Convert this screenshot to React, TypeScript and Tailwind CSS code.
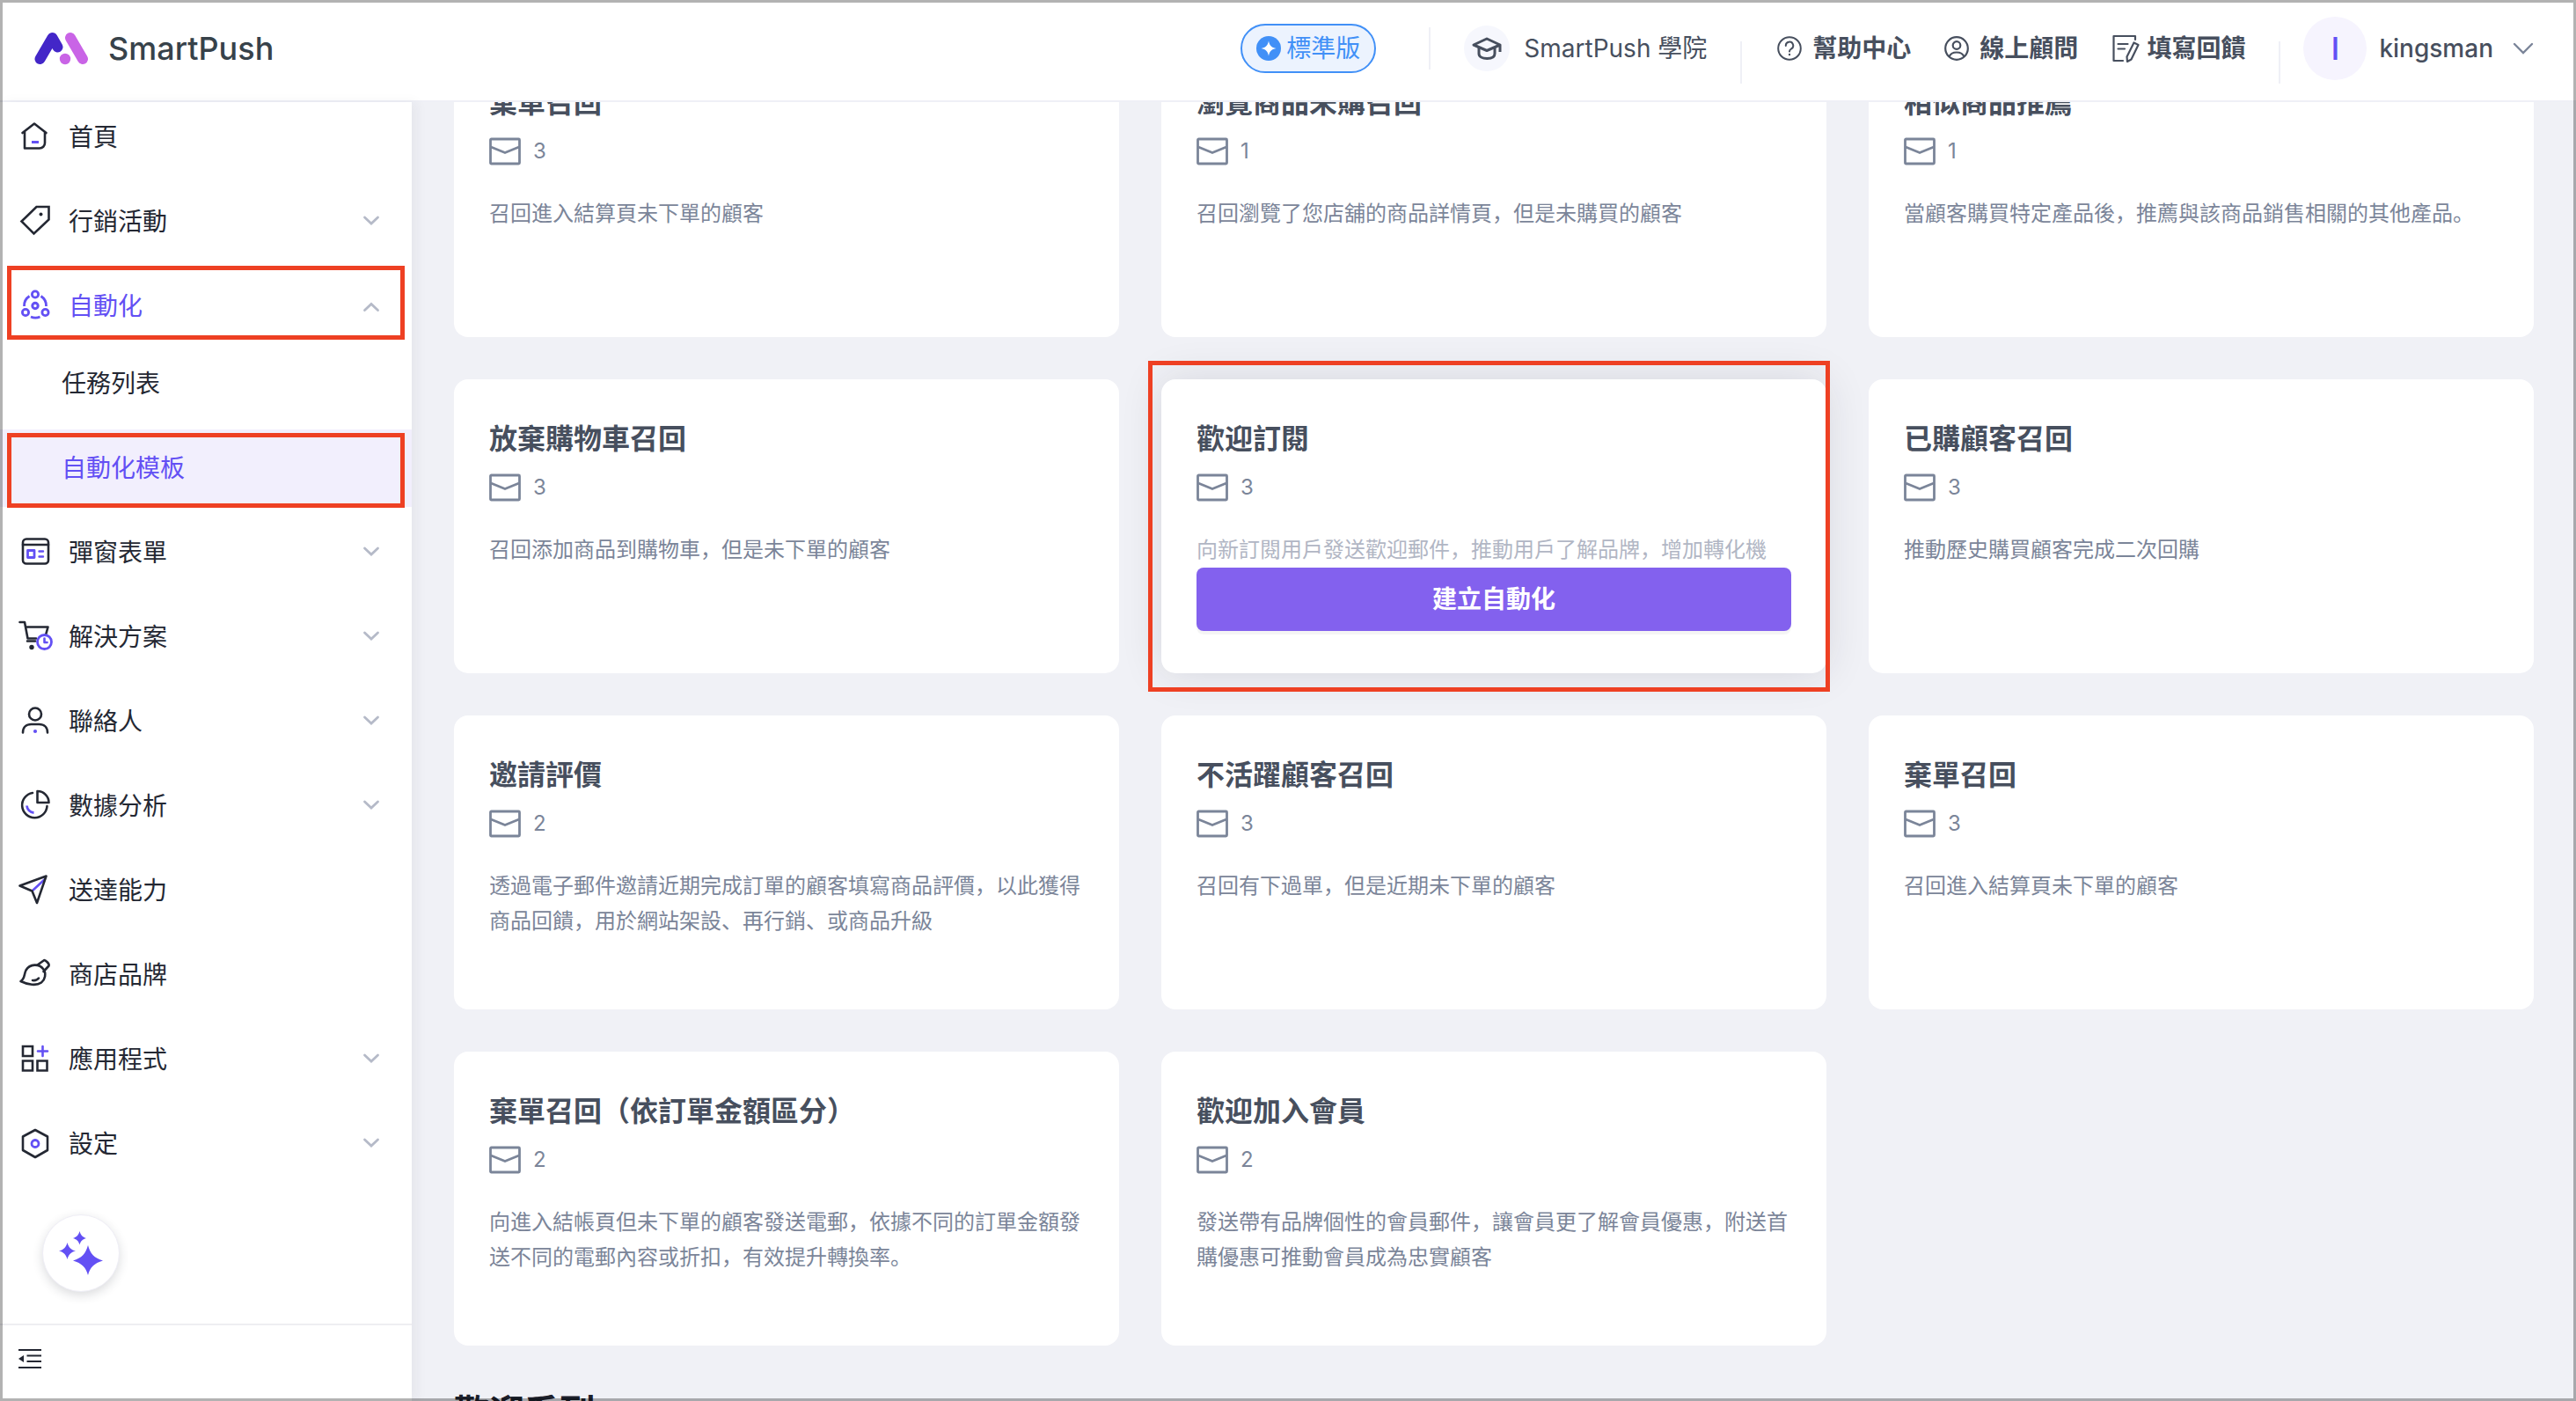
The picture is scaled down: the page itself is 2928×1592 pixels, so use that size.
import React from "react";

const INK = "#242833";
const VIOLET = "#6350f4";

type IconProps = { children: React.ReactNode; color?: string };

function NavSvg({ children, color = INK }: IconProps) {
  return (
    <svg viewBox="0 0 40 40" className="size-10 shrink-0" fill="none" stroke={color} strokeWidth="2.6" strokeLinejoin="round" strokeLinecap="round" aria-hidden="true">
      {children}
    </svg>
  );
}

const icons: Record<string, React.ReactNode> = {
  home: (
    <NavSvg>
      <path d="M5.5 15 19 4.500 32.500 15M8 14v18.500h17a6 6 0 0 0 6-6V14" />
      <path d="M16 25.500h8" stroke={VIOLET} strokeWidth="3" strokeLinecap="butt" />
    </NavSvg>
  ),
  tag: (
    <NavSvg>
      <path d="M21.500 3h14V17.500L18.500 33.500 4.500 19.500z" strokeLinejoin="miter" />
      <circle cx="26.500" cy="11.500" r="2" fill={INK} stroke="none" />
    </NavSvg>
  ),
  automation: (
    <NavSvg color={VIOLET}>
      <circle cx="20" cy="6.500" r="3.600" strokeWidth="2.800" />
      <circle cx="9" cy="27" r="3.600" strokeWidth="2.800" />
      <circle cx="31.500" cy="27" r="3.600" strokeWidth="2.800" />
      <circle cx="20" cy="19.500" r="3.200" strokeWidth="3" />
      <path d="M13.500 8.500A13 13 0 0 0 7.500 20M26.500 8.500A13 13 0 0 1 32.500 20M15 32a14 14 0 0 0 10.500 0" strokeWidth="2.800" strokeLinecap="butt" />
    </NavSvg>
  ),
  form: (
    <NavSvg>
      <rect x="6" y="4.500" width="29" height="28" rx="4" />
      <path d="M6 11h29" />
      <rect x="11.500" y="17.500" width="7.500" height="8" stroke={VIOLET} strokeWidth="2.800" />
      <path d="M24.500 18.500h4.500M24.500 24.500h4.500" stroke={VIOLET} strokeWidth="2.400" />
    </NavSvg>
  ),
  solution: (
    <NavSvg>
      <path d="M2.500 3h5.500l3.500 18.500h9.500M9 8.500h25.500l-2.500 9M11 24.500h9" />
      <circle cx="16" cy="31.500" r="2.700" fill={INK} stroke="none" />
      <circle cx="30.500" cy="25.500" r="8" stroke={VIOLET} strokeWidth="2.800" fill="#fff" />
      <path d="M30.500 21.500v4.500h3" stroke={VIOLET} />
    </NavSvg>
  ),
  contact: (
    <NavSvg>
      <circle cx="20" cy="11.500" r="7" />
      <path d="M6 32.500c0-6 4-9.500 9.500-9.500h9c5.500 0 9.500 3.500 9.500 9.500" />
      <circle cx="20" cy="31" r="2.100" fill={VIOLET} stroke="none" />
    </NavSvg>
  ),
  analytics: (
    <NavSvg>
      <path d="M17 5a14.200 14.200 0 1 0 16.500 15" />
      <path d="M22.500 3v13h13a13 13 0 0 0-13-13z" />
      <path d="M10.500 19.500a8.500 8.500 0 0 0 8 8" stroke={VIOLET} strokeWidth="2.800" strokeLinecap="butt" />
    </NavSvg>
  ),
  send: (
    <NavSvg>
      <path d="M17 20 30.500 7.500" stroke={VIOLET} strokeWidth="2.600" />
      <path d="M2.500 14.500 32.500 3.500 22 34 16.500 20.500z" />
    </NavSvg>
  ),
  brush: (
    <NavSvg>
      <path d="M3.500 27C8.500 24 7 19.500 9.500 14.500a12 12 0 0 1 20-1c3.500 5 1.500 12-2.500 15-5.500 4-15.500 2.500-23.500-1.500z" />
      <path d="M22.500 8.500 30 3.200c1.500-.6 6.500 4 5.500 6.300L29.500 16M17 26c3.500.5 5.500-.5 7-2.500" />
    </NavSvg>
  ),
  apps: (
    <NavSvg>
      <path d="M6 5h11v11H6zM6 21.500h11v11H6zM22.500 21.500h11v11h-11z" strokeLinejoin="miter" />
      <path d="M28.500 5v11M23 10.500h11" stroke={VIOLET} />
    </NavSvg>
  ),
  settings: (
    <NavSvg>
      <path d="M20 4 34 11.500v15.500L20 35 6 27V11.500z" />
      <circle cx="20" cy="19.500" r="4" stroke={VIOLET} strokeWidth="2.800" />
    </NavSvg>
  ),
};

function Caret({ open = false }: { open?: boolean }) {
  return (
    <svg viewBox="0 0 20 14" className="h-3.5 w-5" fill="none" stroke="#b5bac8" strokeWidth="2.800" strokeLinecap="round" aria-hidden="true">
      <path d={open ? "M2.500 11.500 10 4.500l7.500 7" : "M2.500 2 10 9l7.500-7"} />
    </svg>
  );
}

type Item = { icon: string; label: string; caret?: boolean };

const lower: Item[] = [
  { icon: "form", label: "彈窗表單", caret: true },
  { icon: "solution", label: "解決方案", caret: true },
  { icon: "contact", label: "聯絡人", caret: true },
  { icon: "analytics", label: "數據分析", caret: true },
  { icon: "send", label: "送達能力" },
  { icon: "brush", label: "商店品牌" },
  { icon: "apps", label: "應用程式", caret: true },
  { icon: "settings", label: "設定", caret: true },
];

function NavItem({ icon, label, caret }: Item) {
  return (
    <li>
      <a href="#" className="flex h-22 items-center gap-[18px] pr-9 pl-5 text-[#242833]">
        {icons[icon]}
        <span className="grow">{label}</span>
        {caret && <Caret />}
      </a>
    </li>
  );
}

function Sidebar() {
  return (
    <aside className="relative z-10 flex w-[468px] shrink-0 flex-col bg-white text-[28px] leading-10 shadow-[6px_0_12px_rgba(30,35,50,0.05)]">
      <nav className="min-h-0 grow overflow-hidden">
        <ul className="-mt-1 flex flex-col gap-2">
          <NavItem icon="home" label="首頁" />
          <NavItem icon="tag" label="行銷活動" caret />
          <li>
            <a href="#" className="relative flex h-22 items-center gap-[18px] pr-9 pl-5 text-[#6350f4]">
              {icons.automation}
              <span className="grow">自動化</span>
              <Caret open />
              <span className="pointer-events-none absolute inset-x-2 -top-0.5 bottom-1.5 border-5 border-[#ee4023]" />
            </a>
            <ul className="flex flex-col gap-2">
              <li>
                <a href="#" className="flex h-22 items-center pl-[70px] text-[#242833]">任務列表</a>
              </li>
              <li>
                <a href="#" aria-current="page" className="relative flex h-22 items-center bg-[#f2effd] pl-[70px] text-[#6350f4]">
                  自動化模板
                  <span className="pointer-events-none absolute inset-x-2 top-1 -bottom-px border-5 border-[#ee4023]" />
                </a>
              </li>
            </ul>
          </li>
          {lower.map((item) => (
            <NavItem key={item.label} {...item} />
          ))}
        </ul>
      </nav>
      <button type="button" aria-label="AI 助手" className="absolute bottom-31 left-12 flex size-22 items-center justify-center rounded-full border border-[#efeef6] bg-white shadow-[0_4px_12px_rgba(30,35,50,0.16)]">
        <svg viewBox="0 0 50 50" className="size-[50px]" fill={VIOLET} aria-hidden="true">
          <path d="M33 16c2.500 9.500 7 14.500 17 17.500-10 3-14.500 7.500-17 16.500-2.500-9-7-13.500-17-16.500 10-3 14.500-8 17-17.500zM9.500 13c1.500 5.500 4 8 9.500 9.500-5.500 1.500-8 4-9.500 9.500C8 26.500 5.500 24 0 22.500 5.500 21 8 18.500 9.500 13zM23.500 0c1.200 4.500 3.200 6.500 7.500 8-4.300 1.300-6.300 3.300-7.500 7.500C22.300 11.300 20.300 9.300 16 8c4.300-1.500 6.300-3.500 7.500-8z" />
        </svg>
      </button>
      <div className="flex h-22 shrink-0 items-center border-t-2 border-[#eeeef2] pb-2.5 pl-5">
        <button type="button" aria-label="收合選單">
          <svg viewBox="0 0 28 24" className="h-6 w-7" fill="none" stroke={INK} strokeWidth="2" aria-hidden="true">
            <path d="M1 2h26M10.500 8.500H27M10.500 15H27M1 22h26" />
            <path d="M7 8v8l-6-4z" fill={INK} stroke="none" />
          </svg>
        </button>
      </div>
    </aside>
  );
}

function Header() {
  return (
    <header className="flex h-29 shrink-0 items-center border-b-2 border-[#eff0f6] bg-white pr-12 pb-1 pl-[39px] text-[28px] leading-10 text-[#474f5e]">
      <svg viewBox="0 0 62 38" className="h-[38px] w-[62px]" fill="none" strokeWidth="12" strokeLinecap="round" strokeLinejoin="round" role="img" aria-label="SmartPush logo">
        <path d="M6.500 31 20.500 7l6 10.500" stroke="#4326c8" />
        <path d="M41 7l14 24" stroke="#c964e6" />
        <circle cx="35" cy="31" r="6.200" fill="#c964e6" />
      </svg>
      <span className="ml-[22px] text-[36px] font-medium text-[#37424a]">SmartPush</span>
      <div className="ml-auto flex items-center">
        <button type="button" className="flex h-14 items-center gap-1.5 rounded-full border-2 border-[#4190f7] bg-[#ecf3fe] px-4 text-[#4190f7]">
          <svg viewBox="0 0 28 28" className="size-7" aria-hidden="true">
            <circle cx="14" cy="14" r="14" fill="#4190f7" />
            <path d="M14 5.500c1.200 5.500 3 7.300 8.500 8.500-5.500 1.200-7.300 3-8.500 8.500-1.200-5.500-3-7.300-8.500-8.500 5.500-1.200 7.300-3 8.500-8.500z" fill="#fff" />
          </svg>
          標準版
        </button>
        <span className="ml-15 h-12 w-0.5 bg-[#eff0f6]" />
        <a href="#" className="ml-[38px] flex items-center gap-4">
          <span className="flex size-13 items-center justify-center rounded-full bg-[#f6f7fd]">
            <svg viewBox="0 0 36 28" className="h-7 w-9" fill="none" stroke="#474f5e" strokeWidth="3" strokeLinejoin="round" aria-hidden="true">
              <path d="M18 3 3 10l15 6.500L33 10zM33 9.500V18" />
              <path d="M9 13v7c0 3.500 4 5.500 9.300 5.500S27 23.500 27 20v-7" />
            </svg>
          </span>
          SmartPush 學院
        </a>
        <span className="mt-8 ml-[38px] h-12 w-0.5 bg-[#eff0f6]" />
        <nav className="ml-10 flex items-center gap-[38px] font-semibold">
          <a href="#" className="flex items-center gap-3">
            <svg viewBox="0 0 28 28" className="size-7" fill="none" stroke="#474f5e" strokeWidth="2" strokeLinecap="round" aria-hidden="true">
              <circle cx="14" cy="14" r="12.800" />
              <path d="M9.800 11a4.200 4.200 0 1 1 6.200 3.500c-1.500.9-2 1.600-2 3" />
              <circle cx="14" cy="21" r="1.200" fill="#474f5e" stroke="none" />
            </svg>
            幫助中心
          </a>
          <a href="#" className="flex items-center gap-3">
            <svg viewBox="0 0 28 28" className="size-7" fill="none" stroke="#474f5e" strokeWidth="2.200" aria-hidden="true">
              <circle cx="14" cy="14" r="12.800" />
              <circle cx="14" cy="10.500" r="4.300" />
              <path d="M5.500 23.500c1.500-4 5-5 8.500-5s7 1 8.500 5" />
            </svg>
            線上顧問
          </a>
          <a href="#" className="flex items-center gap-2">
            <svg viewBox="0 0 32 32" className="size-8" fill="none" stroke="#474f5e" strokeWidth="2.200" strokeLinecap="round" strokeLinejoin="round" aria-hidden="true">
              <path d="M27 6V2H2.500v28H13M7.500 11h11M7.500 16.500H15" />
              <path d="M25.500 9.500l5 2.500-8 16.500-4.500 2.500-.5-5.500z" />
            </svg>
            填寫回饋
          </a>
        </nav>
        <span className="mt-8 ml-[38px] h-12 w-0.5 bg-[#eff0f6]" />
        <button type="button" className="ml-[26px] flex items-center font-medium">
          <span className="flex size-18 items-center justify-center rounded-full bg-[#f6f4fe] text-[36px] text-[#6350f4]">I</span>
          <span className="ml-3.5">kingsman</span>
          <svg viewBox="0 0 24 16" className="ml-[22px] h-4 w-6" fill="none" stroke="#7b8599" strokeWidth="2.400" strokeLinecap="round" aria-hidden="true">
            <path d="M2 3l10 10L22 3" />
          </svg>
        </button>
      </div>
    </header>
  );
}

type Template = { title: string; count: number; text: string; active?: boolean };

const templates: Template[] = [
  { title: "棄單召回", count: 3, text: "召回進入結算頁未下單的顧客" },
  { title: "瀏覽商品未購召回", count: 1, text: "召回瀏覽了您店舖的商品詳情頁，但是未購買的顧客" },
  { title: "相似商品推薦", count: 1, text: "當顧客購買特定產品後，推薦與該商品銷售相關的其他產品。" },
  { title: "放棄購物車召回", count: 3, text: "召回添加商品到購物車，但是未下單的顧客" },
  { title: "歡迎訂閱", count: 3, text: "向新訂閱用戶發送歡迎郵件，推動用戶了解品牌，增加轉化機", active: true },
  { title: "已購顧客召回", count: 3, text: "推動歷史購買顧客完成二次回購" },
  { title: "邀請評價", count: 2, text: "透過電子郵件邀請近期完成訂單的顧客填寫商品評價，以此獲得商品回饋，用於網站架設、再行銷、或商品升級" },
  { title: "不活躍顧客召回", count: 3, text: "召回有下過單，但是近期未下單的顧客" },
  { title: "棄單召回", count: 3, text: "召回進入結算頁未下單的顧客" },
  { title: "棄單召回（依訂單金額區分）", count: 2, text: "向進入結帳頁但未下單的顧客發送電郵，依據不同的訂單金額發送不同的電郵內容或折扣，有效提升轉換率。" },
  { title: "歡迎加入會員", count: 2, text: "發送帶有品牌個性的會員郵件，讓會員更了解會員優惠，附送首購優惠可推動會員成為忠實顧客" },
];

function Card({ title, count, text, active }: Template) {
  return (
    <article className={active ? "relative h-[334px] rounded-2xl bg-white px-10 pt-10 shadow-[0_0_48px_rgba(30,35,50,0.12)]" : "h-[334px] rounded-2xl bg-white px-10 pt-10"}>
      <h3 className="text-[32px] leading-14 font-semibold text-[#474f5e]">{title}</h3>
      <div className="mt-2.5 flex h-[34px] items-center gap-3.5 text-2xl text-[#7b8599]">
        <svg viewBox="0 0 36 32" className="h-8 w-9" fill="none" stroke="#7b8599" strokeWidth="2.800" strokeLinejoin="round" role="img" aria-label="郵件">
          <rect x="1.500" y="2" width="33" height="28" rx="1" />
          <path d="M2 11l16 6.500L34 11" />
        </svg>
        {count}
      </div>
      <p className={active ? "mt-[34px] text-2xl leading-10 text-[#b1b6c4]" : "mt-[34px] text-2xl leading-10 text-[#7b8599]"}>{text}</p>
      {active && (
        <>
          <button type="button" className="h-18 w-full rounded-lg bg-[#8361ee] text-[28px] font-semibold text-white shadow-[0_4px_0_rgba(0,0,0,0.04)]">
            建立自動化
          </button>
          <span className="pointer-events-none absolute -top-[21px] -right-1 -bottom-[21px] -left-[15px] border-5 border-[#ee4023]" />
        </>
      )}
    </article>
  );
}

export default function App() {
  return (
    <div lang="zh-Hans" className="relative flex h-screen flex-col overflow-hidden bg-[#f0f1f6] font-[Inter,'Noto_Sans_CJK_SC',sans-serif]">
      <Header />
      <div className="flex min-h-0 grow">
        <Sidebar />
        <main className="min-w-0 grow overflow-hidden px-12">
          <section className="-mt-[67px] grid grid-cols-3 gap-12">
            {templates.map((t, i) => (
              <Card key={i} {...t} />
            ))}
          </section>
          <h2 className="mt-12 text-[40px] leading-14 font-bold text-[#1c202b]">歡迎系列</h2>
        </main>
      </div>
      <div className="pointer-events-none absolute inset-0 z-20 border-3 border-black/30" />
    </div>
  );
}
